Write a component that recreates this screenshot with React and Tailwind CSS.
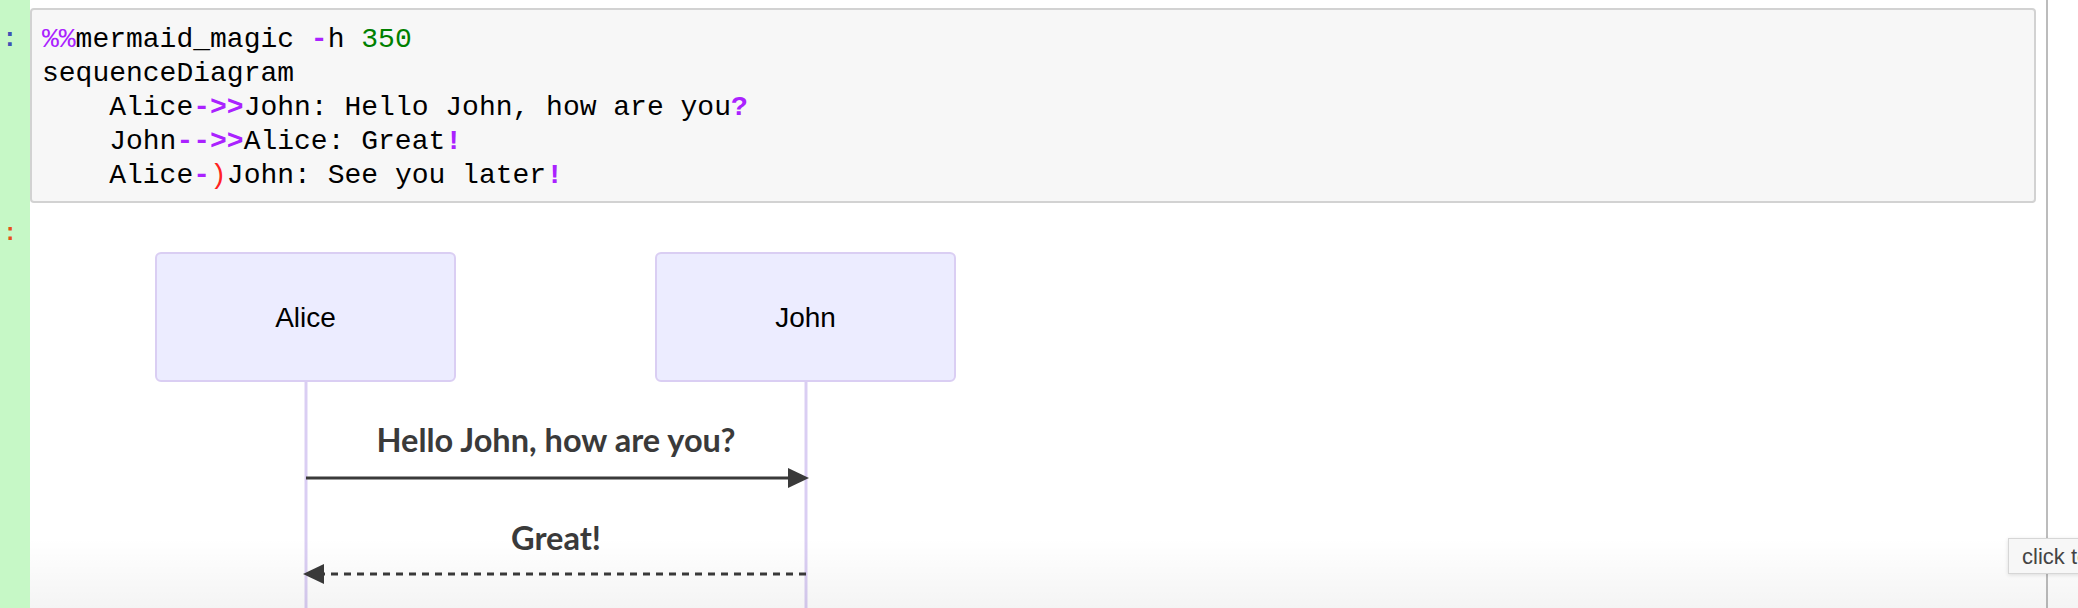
import React from "react";

// ── Notebook cell: %%mermaid_magic input + rendered sequence diagram ──

const mono = { fontFamily: '"Liberation Mono", "DejaVu Sans Mono", monospace' };

function Op({ children }) {
    return <span className="text-[#AA22FF] font-bold">{children}</span>;
}

function CodeBox() {
    return (
        <div className="bg-[#f7f7f7] border-2 border-[#d2d2d2] rounded-[4px] pl-[10px] pt-[13px] pb-[8px] text-[28px] leading-[34px] text-black whitespace-pre" style={mono}>
            <div><span className="text-[#AA22FF]">%%</span>mermaid_magic <Op>-</Op>h <span className="text-[#008000]">350</span></div>
            <div>sequenceDiagram</div>
            <div>{"    Alice"}<Op>{"->>"}</Op>{"John: Hello John, how are you"}<Op>?</Op></div>
            <div>{"    John"}<Op>{"-->>"}</Op>{"Alice: Great"}<Op>!</Op></div>
            <div>{"    Alice"}<Op>-</Op><span className="text-[#ff2222]">)</span>{"John: See you later"}<Op>!</Op></div>
        </div>
    );
}

function SequenceDiagram() {
    const msgFont = '"Lato", "Open Sans", "DejaVu Sans", sans-serif';
    const actorFont = '"Liberation Sans", Arial, sans-serif';
    return (
        <svg width="2016" height="398" viewBox="0 0 2016 398" className="block">
            {/* lifelines */}
            <line x1="276" y1="172" x2="276" y2="398" stroke="#DACEF3" strokeWidth="3" />
            <line x1="776" y1="172" x2="776" y2="398" stroke="#DACEF3" strokeWidth="3" />

            {/* actors */}
            <rect x="126" y="43" width="299" height="128" rx="5" fill="#ECECFF" stroke="#DACEF3" strokeWidth="2" />
            <rect x="626" y="43" width="299" height="128" rx="5" fill="#ECECFF" stroke="#DACEF3" strokeWidth="2" />
            <text x="275.5" y="117" textAnchor="middle" fontSize="28" fill="#000" style={{ fontFamily: actorFont }}>Alice</text>
            <text x="775.5" y="117" textAnchor="middle" fontSize="28" fill="#000" style={{ fontFamily: actorFont }}>John</text>

            {/* Alice ->> John */}
            <text x="526" y="242" textAnchor="middle" fontSize="32" fontWeight="700" fill="#3a3a3a" textLength="359" lengthAdjust="spacingAndGlyphs" style={{ fontFamily: msgFont }}>Hello John, how are you?</text>
            <line x1="276" y1="268" x2="765" y2="268" stroke="#3a3a3a" strokeWidth="3" />
            <path d="M758 258 L779 268 L758 278 Z" fill="#3a3a3a" />

            {/* John -->> Alice */}
            <text x="526" y="340" textAnchor="middle" fontSize="32" fontWeight="700" fill="#3a3a3a" textLength="90" lengthAdjust="spacingAndGlyphs" style={{ fontFamily: msgFont }}>Great!</text>
            <line x1="776" y1="364" x2="290" y2="364" stroke="#3a3a3a" strokeWidth="3" strokeDasharray="7 6" />
            <path d="M294 354 L273 364 L294 374 Z" fill="#3a3a3a" />
        </svg>
    );
}

export default function App() {
    return (
        <div className="relative w-[2078px] h-[608px] overflow-hidden bg-white flex">
            <div className="w-[2046px] flex flex-col">
                {/* input row */}
                <div className="flex">
                    <div className="w-[30px] shrink-0 bg-[#c6f8c6] pt-[22px] pl-[2px]">
                        <div className="text-[26px] leading-[34px] font-bold text-[#3F51B5]" style={mono}>:</div>
                    </div>
                    <div className="flex-1 pt-[8px] pr-[10px]">
                        <CodeBox />
                    </div>
                </div>

                {/* output row */}
                <div className="flex flex-1">
                    <div className="w-[30px] shrink-0 bg-[#c6f8c6] pt-[17px] pl-[3px]">
                        <div className="text-[24px] leading-[28px] font-bold text-[#E6501A]" style={mono}>:</div>
                    </div>
                    <div className="flex-1 pt-[7px]">
                        <SequenceDiagram />
                    </div>
                </div>
            </div>

            <div className="w-[2px] bg-[#bcbcbc]" />
            <div className="flex-1" />

            {/* bottom fade */}
            <div className="absolute left-[30px] right-0 bottom-0 h-[70px] bg-[linear-gradient(to_bottom,rgba(0,0,0,0),rgba(0,0,0,0.045))] pointer-events-none" />

            {/* tooltip */}
            <div className="absolute left-[2008px] top-[538px] h-[36px] flex items-center px-[13px] bg-[#f7f7f7] border border-[#d6d6d6] shadow-[0_1px_4px_rgba(0,0,0,0.12)] whitespace-nowrap text-[22px] text-[#444]" style={{ fontFamily: '"Liberation Sans", Arial, sans-serif' }}>
                click to scroll output; double click to hide
            </div>
        </div>
    );
}
